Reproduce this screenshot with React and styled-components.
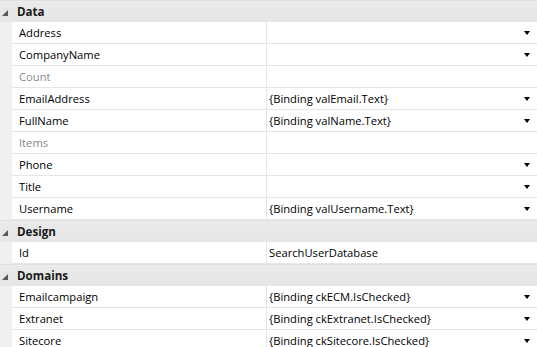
import React from 'react';
import styled, { createGlobalStyle } from 'styled-components';

const GlobalStyle = createGlobalStyle`
    body {
        margin: 0;
        background: #ffffff;
        font-family: "Open Sans", "Noto Sans", sans-serif;
        font-size: 11.2px;
        color: #000;
    }
`;

const categories = [
    {
        name: 'Data',
        props: [
            { name: 'Address', value: '', drop: true },
            { name: 'CompanyName', value: '', drop: true },
            { name: 'Count', value: '', readOnly: true },
            { name: 'EmailAddress', value: '{Binding valEmail.Text}', drop: true },
            { name: 'FullName', value: '{Binding valName.Text}', drop: true },
            { name: 'Items', value: '', readOnly: true },
            { name: 'Phone', value: '', drop: true },
            { name: 'Title', value: '', drop: true },
            { name: 'Username', value: '{Binding valUsername.Text}', drop: true },
        ],
    },
    {
        name: 'Design',
        props: [{ name: 'Id', value: 'SearchUserDatabase' }],
    },
    {
        name: 'Domains',
        props: [
            { name: 'Emailcampaign', value: '{Binding ckECM.IsChecked}', drop: true },
            { name: 'Extranet', value: '{Binding ckExtranet.IsChecked}', drop: true },
            { name: 'Sitecore', value: '{Binding ckSitecore.IsChecked}', drop: true },
        ],
    },
];

export default function App() {
    return (
        <>
        <GlobalStyle />
        <Grid>
            {categories.map(cat => (
                <Category key={cat.name}>
                    <Header>
                        <Expander>
                            <svg width="6" height="6" viewBox="0 0 6 6">
                                <path d="M6 0 L6 6 L0 6 Z" fill="#595959" />
                            </svg>
                        </Expander>
                        <HeaderTitle>{cat.name}</HeaderTitle>
                    </Header>
                    {cat.props.map(p => (
                        <Row key={p.name}>
                            <Gutter />
                            <NameCell $readOnly={p.readOnly}>{p.name}</NameCell>
                            <ValueCell>
                                <ValueText>{p.value}</ValueText>
                                {p.drop && <DropArrow />}
                            </ValueCell>
                        </Row>
                    ))}
                </Category>
            ))}
        </Grid>
        </>
    );
}

const Grid = styled.div`
    width: 537px;
    height: 347px;
    overflow: hidden;
    display: flex;
    flex-direction: column;
    background: #f0f0f0;
`;

const Category = styled.section`
    display: flex;
    flex-direction: column;
`;

const Header = styled.div`
    height: 22px;
    display: flex;
    align-items: center;
    background: linear-gradient(to bottom, #ededed 0%, #e9e9e9 12%, #e6e6e6 100%);
    border-top: 1px solid #e0e0e0;
    box-sizing: border-box;
`;

const Expander = styled.span`
    width: 17px;
    display: flex;
    padding-left: 2px;
    box-sizing: border-box;
    margin-top: 3px;
`;

const HeaderTitle = styled.span`
    font-weight: 700;
    font-size: 11.6px;
    color: #1a1a1a;
`;

const Row = styled.div`
    height: 22px;
    display: flex;
`;

const Gutter = styled.div`
    width: 12px;
    flex: none;
    background: #f0f0f0;
`;

const NameCell = styled.div`
    width: 255px;
    flex: none;
    display: flex;
    align-items: center;
    padding-left: 7px;
    box-sizing: border-box;
    background: #fff;
    border-bottom: 1px solid #e6e6e6;
    border-right: 1px solid #e6e6e6;
    color: ${props => (props.$readOnly ? '#8a8a8a' : '#000')};
`;

const ValueCell = styled.div`
    flex: 1;
    display: flex;
    align-items: center;
    justify-content: space-between;
    padding: 0 7px 0 2px;
    background: #fff;
    border-bottom: 1px solid #e6e6e6;
`;

const ValueText = styled.span`
    white-space: nowrap;
`;

const DropArrow = styled.span`
    width: 0;
    height: 0;
    border-left: 3.5px solid transparent;
    border-right: 3.5px solid transparent;
    border-top: 4px solid #000;
`;
